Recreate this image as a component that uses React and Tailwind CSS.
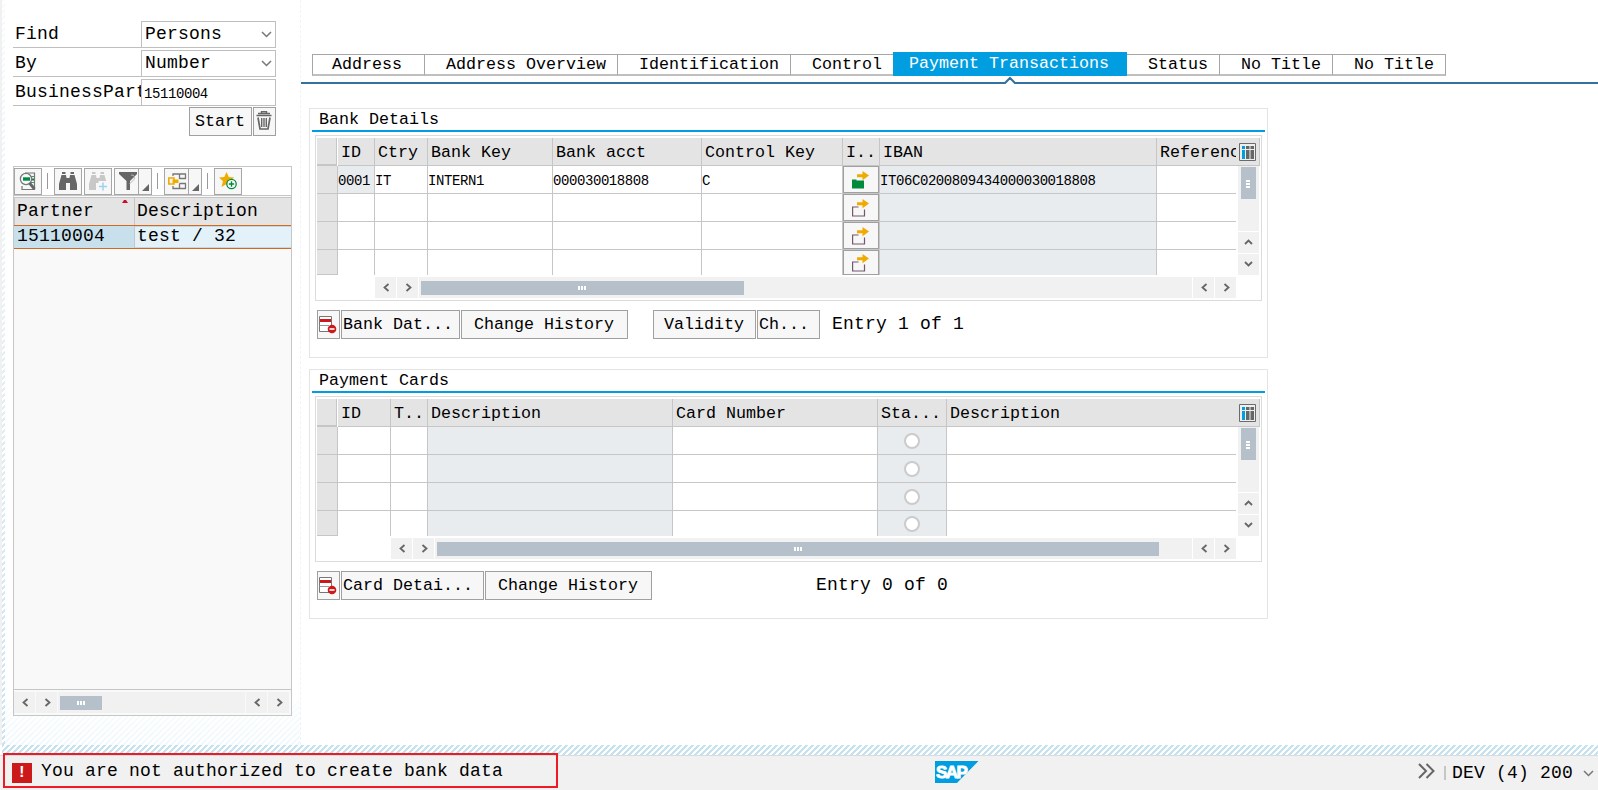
import React from 'react'

const tabs = [
  { label: 'Address', className: 'w-[113px] border-l pl-[19px]' },
  { label: 'Address Overview', className: 'w-[193px] pl-[21px]' },
  { label: 'Identification', className: 'w-[173px] pl-[21px]' },
  { label: 'Control', className: 'w-[102px] pl-[21px] border-r-0' },
  { label: 'Payment Transactions', active: true },
  { label: 'Status', className: 'w-[93px] pl-[21px]' },
  { label: 'No Title', className: 'w-[113px] pl-[21px]' },
  { label: 'No Title', className: 'w-[113px] pl-[21px]' }
]

const bankColumns = [
  { key: 'id', label: 'ID', width: 'w-[37px]' },
  { key: 'country', label: 'Ctry', width: 'w-[53px]' },
  { key: 'bankKey', label: 'Bank Key', width: 'w-[125px]' },
  { key: 'account', label: 'Bank acct', width: 'w-[149px]' },
  { key: 'control', label: 'Control Key', width: 'w-[141px]' },
  { key: 'link', label: 'I..', width: 'w-[37px]', type: 'button' },
  { key: 'iban', label: 'IBAN', width: 'w-[277px]', readOnly: true },
  { key: 'reference', label: 'Reference', width: 'w-[79px]' }
]

const bankRows = [
  { id: '0001', country: 'IT', bankKey: 'INTERN1', account: '000030018808', control: 'C', link: true, iban: 'IT06C0200809434000030018808' },
  {},
  {},
  {}
]

const cardColumns = [
  { key: 'id', label: 'ID', width: 'w-[53px]' },
  { key: 'type', label: 'T..', width: 'w-[37px]' },
  { key: 'typeText', label: 'Description', width: 'w-[245px]', readOnly: true },
  { key: 'number', label: 'Card Number', width: 'w-[205px]' },
  { key: 'standard', label: 'Sta...', width: 'w-[69px]', type: 'radio', readOnly: true },
  { key: 'text', label: 'Description', width: 'w-[289px]' }
]

const cardRows = [{}, {}, {}, {}]

const Chevron = ({ dir }) => {
  const paths = {
    left: 'M8.5 2 L4.5 5.5 L8.5 9',
    right: 'M4.5 2 L8.5 5.5 L4.5 9',
    up: 'M2 7 L5.5 3.5 L9 7',
    down: 'M2 3 L5.5 6.5 L9 3'
  }
  return (
    <svg width="11" height="11" viewBox="0 0 11 11" fill="none" stroke="#666" strokeWidth="1.8">
      <path d={paths[dir]} />
    </svg>
  )
}

const SelectArrow = () => (
  <svg width="11" height="7" viewBox="0 0 11 7" fill="none" stroke="#777" strokeWidth="1.5">
    <path d="M1 1 L5.5 5.5 L10 1" />
  </svg>
)

const ScrollButton = ({ dir }) => (
  <div className="w-[21px] h-[21px] shrink-0 bg-[#f1f1f1] flex items-center justify-center">
    <Chevron dir={dir} />
  </div>
)

const HorizontalScroll = ({ thumb }) => (
  <div className="flex gap-px h-[21px]">
    <ScrollButton dir="left" />
    <ScrollButton dir="right" />
    <div className="flex-1 bg-[#f1f1f1] flex items-center pl-[2px]">
      <div className={`h-[14px] bg-[#b6c0cb] flex items-center justify-center gap-px pr-px ${thumb}`}>
        <i className="w-[2px] h-1 bg-white" />
        <i className="w-[2px] h-1 bg-white" />
        <i className="w-[2px] h-1 bg-white" />
      </div>
    </div>
    <ScrollButton dir="left" />
    <ScrollButton dir="right" />
  </div>
)

const VerticalScroll = () => (
  <div className="w-[21px] ml-[2px] flex flex-col gap-px">
    <div className="flex-1 bg-[#f1f1f1] pt-px pl-[3px]">
      <div className="w-[15px] h-8 bg-[#b6c0cb] flex flex-col items-center justify-center gap-px pt-[2px] pr-px">
        <i className="w-1 h-[2px] bg-white" />
        <i className="w-1 h-[2px] bg-white" />
        <i className="w-1 h-[2px] bg-white" />
      </div>
    </div>
    <ScrollButton dir="up" />
    <ScrollButton dir="down" />
  </div>
)

const Button = ({ children, className = '' }) => (
  <button className={`h-[29px] shrink-0 border border-[#a0a0a0] bg-[#f7f7f7] whitespace-nowrap leading-[27px] text-left ${className}`}>
    {children}
  </button>
)

const LinkIcon = ({ filled }) => (
  <svg width="18" height="18" viewBox="0 0 18 18">
    {filled ? (
      <path d="M0 8.5 H4.5 V9.5 H12 V17.5 H0 Z" fill="#008a3b" />
    ) : (
      <path d="M6.5 8 H.6 V17 H12.5 V10.5" fill="none" stroke="#73566f" strokeWidth="1.2" />
    )}
    <path d="M5 3.2 H10.5 V0 L17 4.6 L10.5 9.2 V6.2 H5 Z" fill="#f0ab00" />
  </svg>
)

const DeleteRowIcon = () => (
  <svg width="18" height="18" viewBox="0 0 18 18">
    <path d="M.5 .5 H12.5 V15.5 H.5 Z" fill="#fff" stroke="#777" />
    <path d="M.5 9.5 H10" stroke="#999" />
    <path d="M1 3 H12 V6 H1 Z" fill="#cc1919" />
    <circle cx="13" cy="13" r="4.3" fill="#cc1919" />
    <path d="M10.5 13 H15.5" stroke="#fff" strokeWidth="1.6" />
  </svg>
)

const ConfigIcon = () => (
  <svg width="17" height="18" viewBox="0 0 17 18">
    <path d="M.5 .5 H16.5 V17.5 H.5 Z" fill="#efefef" stroke="#6b6b6b" />
    <path d="M3 3 H6 V6 H3 Z M3 7 H6 V16 H3 Z" fill="#009de0" />
    <path d="M7 3 H10.5 V6 H7 Z M7 7 H10.5 V16 H7 Z M11.5 3 H15 V6 H11.5 Z M11.5 7 H15 V16 H11.5 Z" fill="#666" />
  </svg>
)

const TrashIcon = () => (
  <svg width="17" height="19" viewBox="0 0 17 19" fill="none" stroke="#666">
    <path d="M.5 4.5 H15.5 M2 2.5 H14" strokeWidth="1.4" />
    <path d="M5.5 2 V.7 H10.5 V2" strokeWidth="1.4" />
    <path d="M2 6.5 L4 18 H12 L14 6.5" strokeWidth="1.7" />
    <path d="M5.7 7 V16 M8 7 V16 M10.3 7 V16" strokeWidth="1.4" />
  </svg>
)

const DetailIcon = () => (
  <svg width="18" height="19" viewBox="0 0 18 19" fill="none">
    <path d="M6 1 H15.5 V17.5 H3 V14" stroke="#777" strokeWidth="1.2" />
    <path d="M11 4.5 H15 M11 10.5 H15" stroke="#777" />
    <path d="M11 7.5 H15" stroke="#008a3b" strokeWidth="2" />
    <circle cx="7" cy="7" r="5.6" fill="#f4fbff" stroke="#777" strokeWidth="1.3" />
    <path d="M4 7 H11" stroke="#008a3b" strokeWidth="3.4" />
    <path d="M10.5 11 L15.5 17" stroke="#666" strokeWidth="2.8" />
  </svg>
)

const BinocularsIcon = ({ faded }) => (
  <svg width="20" height="19" viewBox="0 0 20 19">
    <path
      d="M4 0 H7.5 V2 H4 Z M12.5 0 H16 V2 H12.5 Z M3.5 3 H8 L8.5 6 H11.5 L12 3 H16.5 L19 12 V18 H12 V11 H8 V18 H1 V12 Z"
      fill={faded ? '#c8c8c8' : '#666'}
    />
    {faded && <path d="M10.5 9 H20 V19 H10.5 Z" fill="#f7f7f7" />}
    {faded && <path d="M15 10.5 V18.5 M11 14.5 H19" stroke="#9bd3ee" strokeWidth="1.5" />}
  </svg>
)

const FilterIcon = () => (
  <svg width="18" height="19" viewBox="0 0 18 19">
    <path d="M0 0 H18 V2 L11 9 V18 H7.5 V9 L0 2 Z" fill="#666" />
    <path d="M12 3 Q17 3 15 7.5 L10.5 12" fill="none" stroke="#b7b7b7" />
  </svg>
)

const LayoutIcon = () => (
  <svg width="19" height="17" viewBox="0 0 19 17" fill="none">
    <path d="M5 3 V1 H18 M5 13 V15.5 H18 M11.5 5.5 H18 M11.5 10.5 H18 M11.5 1 V6 M11.5 10.5 V15.5 M17.5 1 V5.5 M17.5 10.5 V15.5" stroke="#777" strokeWidth="1.3" />
    <path d="M.8 5 H6 V11 H.8 Z" stroke="#f0ab00" strokeWidth="1.6" />
    <path d="M4.5 6.5 H10.5 V10 H4.5 Z" fill="#f0ab00" />
  </svg>
)

const FavoriteIcon = () => (
  <svg width="18" height="18" viewBox="0 0 18 18">
    <path d="M7.5 0 L9.8 5 L15 5.5 L11.3 9 L12 15 L7.5 12 L2.5 15 L4 9.3 L0 5.5 L5.3 5 Z" fill="#f0ab00" />
    <circle cx="12.5" cy="12" r="4.7" fill="#fff" stroke="#008a3b" strokeWidth="1.3" />
    <path d="M12.5 9.3 V14.7 M9.8 12 H15.2" stroke="#008a3b" strokeWidth="1.4" />
  </svg>
)

const ToolButton = ({ children, menu, className = 'w-7' }) => (
  <button className={`h-[27px] shrink-0 border border-[#a6a6a6] bg-[#f7f7f7] flex ${className}`}>
    <span className={`flex-1 h-full flex items-center ${menu ? 'justify-end pr-px' : 'justify-center'}`}>{children}</span>
    {menu && (
      <span className="w-[13px] h-full border-l border-[#a6a6a6] flex items-end justify-center pb-[3px]">
        <svg width="7" height="7" viewBox="0 0 7 7"><path d="M7 0 V7 H0 Z" fill="#666" /></svg>
      </span>
    )}
  </button>
)

const ToolDivider = () => <span className="w-px h-4 mx-[5px] bg-[#999]" />

const Cell = ({ column, row }) => {
  if (column.type === 'button') {
    return (
      <div className="w-full h-full flex items-center justify-center border border-[#a0a0a0] bg-[#f7f7f7] overflow-hidden">
        <LinkIcon filled={row.link} />
      </div>
    )
  }
  if (column.type === 'radio') {
    return (
      <div className="w-full h-full flex items-center justify-center">
        <span className="w-4 h-4 rounded-full bg-white border-2 border-[#cbcbcb]" />
      </div>
    )
  }
  return <span className="block pt-[3px] text-[14px] tracking-[-0.42px] leading-6 whitespace-nowrap">{row[column.key]}</span>
}

const TableControl = ({ columns, rows, thumb, scrollOffset }) => (
  <div className="mx-[5px] mt-[3px] h-[166px] border border-[#dcdcdc] pt-[2px] pl-px">
    <div className="w-[943px] h-7 flex bg-[#e4e4e4] border-b border-r border-[#c6c6c6]">
      <div className="w-5 h-[27px] border-r border-b border-[#c6c6c6]" />
      <div className="w-px h-7 bg-white" />
      {columns.map((col, i) => (
        <div
          key={i}
          className={`${col.width} shrink-0 h-[27px] pt-px pl-[3px] overflow-hidden whitespace-nowrap leading-[27px] ${i < columns.length - 1 ? 'border-r border-[#c6c6c6]' : ''}`}
        >
          {col.label}
        </div>
      ))}
      <div className="flex-1 flex items-center justify-end pr-[3px] pt-px">
        <ConfigIcon />
      </div>
    </div>
    <div className="flex h-[109px]">
      <div className="w-[919px]">
        {rows.map((row, r) => (
          <div key={r} className={`flex ${r === 3 ? 'h-[25px]' : 'h-7'}`}>
            <div className="w-[21px] h-full bg-[#e4e4e4] border-r border-b border-[#c6c6c6]" />
            {columns.map((col, i) => (
              <div
                key={i}
                className={`${col.width} shrink-0 border-[#c6c6c6] ${r < 3 ? 'border-b' : ''} ${i < columns.length - 1 ? 'border-r' : ''} ${col.readOnly || (col.key === 'id' && row.id) ? 'bg-[#e8ecef]' : 'bg-white'}`}
              >
                <Cell column={col} row={row} />
              </div>
            ))}
          </div>
        ))}
      </div>
      <VerticalScroll />
    </div>
    <div className={`mt-[2px] mr-[25px] ${scrollOffset}`}>
      <HorizontalScroll thumb={thumb} />
    </div>
  </div>
)

const Panel = ({ title, children }) => (
  <div className="w-[959px] h-[250px] border border-[#e4e4e4]">
    <h2 className="h-[23px] mx-[2px] pl-[7px] leading-[21px] border-b-2 border-[#009de0]">{title}</h2>
    {children}
  </div>
)

const SearchPanel = () => (
  <div className="w-[263px] pt-[21px] text-[18px] tracking-[0.2px] leading-[27px]">
    <div className="flex h-[27px] border-b border-[#bfbfbf]">
      <label className="w-32 pl-[2px]">Find</label>
      <div className="flex-1 h-[27px] border border-[#bfbfbf] bg-white pl-[3px] pr-[3px] flex items-center justify-between leading-[25px]">
        Persons <SelectArrow />
      </div>
    </div>
    <div className="flex h-[27px] mt-[2px] border-b border-[#bfbfbf]">
      <label className="w-32 pl-[2px]">By</label>
      <div className="flex-1 h-[27px] border border-[#bfbfbf] bg-white pl-[3px] pr-[3px] flex items-center justify-between leading-[25px]">
        Number <SelectArrow />
      </div>
    </div>
    <div className="flex h-[27px] mt-[2px] border-b border-[#bfbfbf]">
      <label className="w-32 pl-[2px] overflow-hidden">BusinessPart</label>
      <div className="flex-1 h-[27px] border border-[#bfbfbf] bg-white pl-[2px] pt-[2px] text-[14px] tracking-[-0.42px] leading-[25px]">
        15110004
      </div>
    </div>
    <div className="flex justify-end gap-px mt-px text-[16.67px] tracking-normal">
      <Button className="w-[63px] pl-[5px] pb-px">Start</Button>
      <Button className="w-[23px] pl-[2px] pb-[2px]"><TrashIcon /></Button>
    </div>
  </div>
)

const ResultList = () => (
  <div className="w-[279px] h-[550px] mt-[30px] border border-[#c6c6c6] bg-[#f9f9f9] flex flex-col text-[18px] tracking-[0.2px]">
    <div className="h-[29px] pt-px bg-white border-b border-[#c6c6c6] flex">
      <div className="flex items-center h-[26px]">
        <ToolButton><DetailIcon /></ToolButton>
        <ToolDivider />
        <div className="flex gap-[2px] ml-px">
          <ToolButton><BinocularsIcon /></ToolButton>
          <ToolButton><BinocularsIcon faded /></ToolButton>
          <ToolButton menu className="w-[38px]"><FilterIcon /></ToolButton>
        </div>
        <ToolDivider />
        <ToolButton menu className="w-[38px] ml-px"><LayoutIcon /></ToolButton>
        <ToolDivider />
        <ToolButton className="w-7 ml-px"><FavoriteIcon /></ToolButton>
      </div>
    </div>
    <div className="mt-px h-7 flex bg-[#e4e4e4] border-t border-l border-[#c6c6c6] leading-[26px]">
      <div className="w-[120px] pl-[2px] border-r border-[#c6c6c6] flex justify-between">
        Partner
        <svg width="6" height="3" viewBox="0 0 6 3" className="mt-[2px] mr-[6px]"><path d="M0 3 L2 0 H4 L6 3 Z" fill="#c8102e" /></svg>
      </div>
      <div className="flex-1 pl-[2px]">Description</div>
    </div>
    <div className="h-6 flex border-y border-[#d2691e] leading-[20px]">
      <div className="w-[121px] pl-[3px] bg-[#c8e0ec] border-r border-[#c6c6c6]">15110004</div>
      <div className="flex-1 pl-[2px] bg-[#e3f1f9] border-y border-[#ccd6dc] leading-[18px]">test / 32</div>
    </div>
    <div className="flex-1" />
    <div className="h-[26px] border-t border-[#c6c6c6] pr-[2px] pt-[2px]">
      <HorizontalScroll thumb="w-[42px]" />
    </div>
  </div>
)

const StatusBar = () => (
  <footer className="relative h-[35px] bg-[#f1f1f1] border-t border-[#d6dde1] text-[18px] tracking-[0.2px] flex">
    <div className="w-[935px] flex">
      <div className="w-5 h-5 ml-3 mt-[7px] bg-[#cc1919] text-white font-bold text-[16px] leading-5 text-center">!</div>
      <span className="ml-[9px] leading-[30px]">You are not authorized to create bank data</span>
    </div>
    <svg width="44" height="22" viewBox="0 0 44 22" className="mt-[5px]">
      <path d="M0 0 H43.5 L22 22 H0 Z" fill="#009de0" />
      <text x="1" y="16.5" fontSize="17" fontWeight="700" fill="#fff" stroke="#fff" strokeWidth=".9" fontFamily="Liberation Sans, sans-serif" textLength="32" lengthAdjust="spacing">SAP</text>
    </svg>
    <div className="ml-auto flex pr-[4px]">
      <svg width="17" height="16" viewBox="0 0 17 16" className="mt-[7px]" fill="none" stroke="#666" strokeWidth="2">
        <path d="M1 1 L8 8 L1 15 M8.5 1 L15.5 8 L8.5 15" />
      </svg>
      <span className="w-[2px] h-[14px] ml-[9px] mt-[10px] bg-[#c6c6c6]" />
      <span className="ml-[6px] leading-[34px]">DEV (4) 200</span>
      <span className="ml-[10px] mt-[14px]"><SelectArrow /></span>
    </div>
    {/* highlight around the message */}
    <div className="absolute left-[3px] -top-[3px] w-[555px] h-[35px] border-2 border-[#ed1c24]" />
  </footer>
)

const App = () => {
  return (
    <div className="w-[1598px] h-[790px] overflow-hidden bg-white text-black font-['Liberation_Mono',monospace] text-[16.67px]">
      <div className="h-[745px] flex">
        <div className="w-[2px] bg-[#f1f1f1]" />
        <div className="w-[3px] bg-[linear-gradient(135deg,#cbe4f2_25%,#fff_25%_50%,#cbe4f2_50%_75%,#fff_75%)] bg-size-[6px_6px] mask-[linear-gradient(to_bottom,rgba(0,0,0,0.15),#000)]" />
        <aside className="relative w-[296px] pl-2 border-r border-dashed border-[#edf5fa]">
          <div className="absolute left-0 right-0 bottom-0 h-[45px] bg-[linear-gradient(135deg,#f1f9fc_25%,#fff_25%_50%,#f1f9fc_50%_75%,#fff_75%)] bg-size-[6px_6px] mask-[linear-gradient(to_bottom,rgba(0,0,0,0.3),#000)]" />
          <div className="relative">
            <SearchPanel />
            <ResultList />
          </div>
        </aside>
        <main className="flex-1">
          <nav className="relative h-[84px] border-b-2 border-[#33719f] pt-[52px] pl-[11px] flex items-start">
            {tabs.map((tab, i) =>
              tab.active ? (
                <div key={i} className="w-[234px] h-6 pl-4 bg-[#009de0] text-white leading-6 whitespace-nowrap">{tab.label}</div>
              ) : (
                <div
                  key={i}
                  className={`h-[22px] mt-[2px] border-r border-t border-b-2 border-x-[#a6a6a6] border-t-[#a6a6a6] border-b-[#bfbfbf] bg-white leading-[19px] whitespace-nowrap ${tab.className}`}
                >
                  {tab.label}
                </div>
              )
            )}
            <svg width="14" height="8" viewBox="0 0 14 8" className="absolute left-[702px] top-[76px]">
              <path d="M0 8 H14 L7 2 Z" fill="#fff" />
              <path d="M0 7.5 L2 7 L7 2 L12 7 L14 7.5" fill="none" stroke="#33719f" strokeWidth="2" />
            </svg>
          </nav>
          <div className="pt-6 pl-2 flex flex-col gap-[11px]">
            <Panel title="Bank Details">
              <TableControl columns={bankColumns} rows={bankRows} thumb="w-[323px]" scrollOffset="ml-[58px]" />
              <div className="flex mt-[9px] pl-[7px]">
                <Button className="w-[23px] pl-px"><DeleteRowIcon /></Button>
                <Button className="w-[119px] ml-px pl-px">Bank Dat...</Button>
                <Button className="w-[167px] ml-px pl-3">Change History</Button>
                <Button className="w-[103px] ml-[25px] pl-[10px]">Validity</Button>
                <Button className="w-[63px] ml-px pl-px">Ch...</Button>
                <span className="ml-3 text-[18px] tracking-[0.2px] leading-[29px]">Entry 1 of 1</span>
              </div>
            </Panel>
            <Panel title="Payment Cards">
              <TableControl columns={cardColumns} rows={cardRows} thumb="w-[722px]" scrollOffset="ml-[74px]" />
              <div className="flex mt-[9px] pl-[7px]">
                <Button className="w-[23px] pl-px"><DeleteRowIcon /></Button>
                <Button className="w-[143px] ml-px pl-px">Card Detai...</Button>
                <Button className="w-[167px] ml-px pl-3">Change History</Button>
                <span className="ml-[164px] text-[18px] tracking-[0.2px] leading-[29px]">Entry 0 of 0</span>
              </div>
            </Panel>
          </div>
        </main>
      </div>
      <div className="h-[10px] ml-[2px] bg-[linear-gradient(135deg,#c6e2f0_25%,#fff_25%_50%,#c6e2f0_50%_75%,#fff_75%)] bg-size-[6px_6px]" />
      <StatusBar />
    </div>
  )
}

export default App
